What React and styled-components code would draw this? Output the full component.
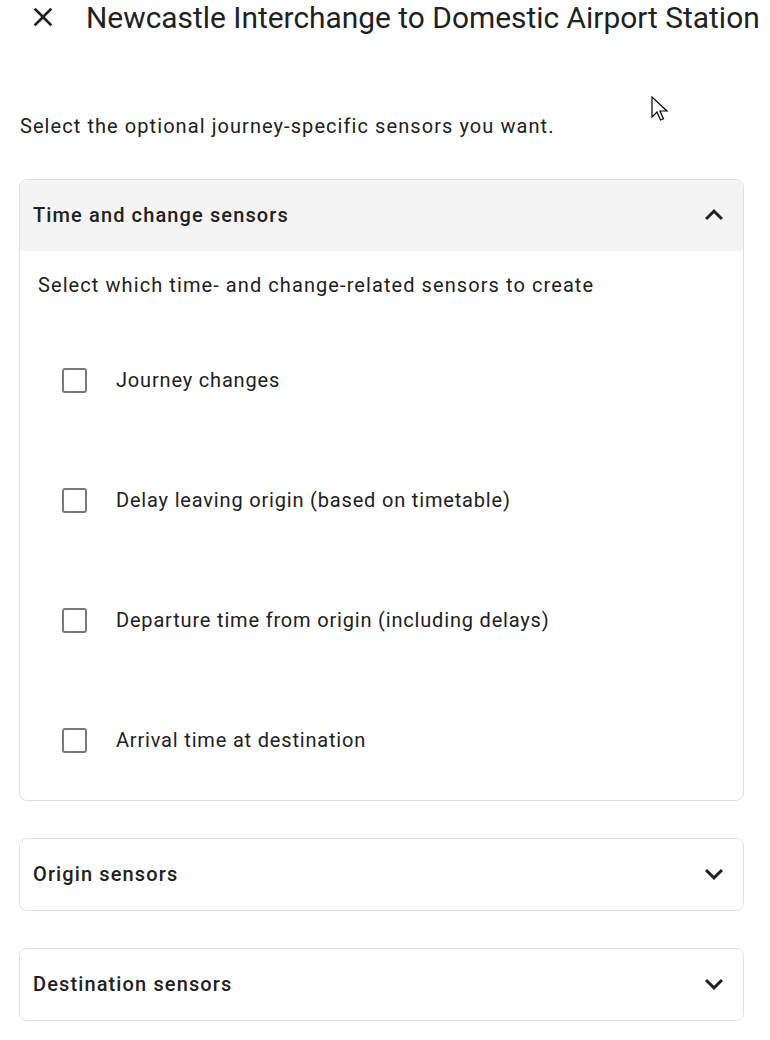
import * as React from 'react'
import styled, { createGlobalStyle } from 'styled-components'

const GlobalStyle = createGlobalStyle`
  body {
    margin: 0;
    background: #ffffff;
    font-family: Roboto, "Noto Sans", sans-serif;
    color: #212121;
  }
`

const Page = styled.div`
  position: relative;
  width: 770px;
  height: 1040px;
  overflow: hidden;
`

const TopBar = styled.div`
  display: flex;
  align-items: center;
  height: 34px;
  padding-left: 27px;
  gap: 27px;
  white-space: nowrap;
`

const CloseButton = styled.button`
  border: 0;
  background: none;
  padding: 0;
  width: 32px;
  height: 32px;
  display: flex;
  align-items: center;
  justify-content: center;
  color: #212121;
`

const Title = styled.h1`
  margin: 0;
  font-size: 29.9px;
  font-weight: 400;
  color: #212121;
`

const Content = styled.div`
  padding: 0 26px 0 19px;
`

const Intro = styled.p`
  margin: 80px 0 41px 1px;
  font-size: 20px;
  line-height: 24px;
  letter-spacing: 1.07px;
  color: #212121;
`

const Card = styled.div`
  border: 1px solid #e0e0e0;
  border-radius: 8px;
  overflow: hidden;
  margin-bottom: 37px;
`

const CardHeader = styled.div`
  display: flex;
  align-items: center;
  justify-content: space-between;
  height: 71px;
  padding: 0 11px 1px 13px;
  box-sizing: border-box;
  background: ${(p) => (p.open ? '#f4f4f4' : '#ffffff')};
`

const CardTitle = styled.div`
  font-size: 20px;
  font-weight: 500;
  letter-spacing: 1.12px;
  color: #212121;
`

const CardBody = styled.div`
  padding: 22px 18px 0;
`

const Description = styled.div`
  font-size: 20px;
  line-height: 24px;
  letter-spacing: 1.08px;
  margin-bottom: 23px;
`

const OptionRow = styled.label`
  display: flex;
  align-items: center;
  height: 120px;
  padding-left: 24px;
  gap: 29px;
`

const Box = styled.span`
  width: 21px;
  height: 21px;
  border: 2.5px solid #7a7a7a;
  border-radius: 3px;
`

const OptionLabel = styled.span`
  font-size: 20px;
  letter-spacing: 0.82px;
  color: #212121;
`

const Cursor = styled.svg`
  position: absolute;
  left: 651px;
  top: 96px;
`

const Chevron = ({ up }) => (
  <svg width="36" height="36" viewBox="0 0 24 24">
    <path
      d={up ? 'M7.41 15.41 12 10.83l4.59 4.58L18 14l-6-6-6 6z' : 'M7.41 8.59 12 13.17l4.59-4.58L18 10l-6 6-6-6z'}
      fill="#212121"
    />
  </svg>
)

const options = [
  'Journey changes',
  'Delay leaving origin (based on timetable)',
  'Departure time from origin (including delays)',
  'Arrival time at destination',
]

export default function App() {
  return (
    <Page>
      <GlobalStyle />
      <TopBar>
        <CloseButton>
          <svg width="32" height="32" viewBox="0 0 24 24">
            <path
              d="M19 6.41 17.59 5 12 10.59 6.41 5 5 6.41 10.59 12 5 17.59 6.41 19 12 13.41 17.59 19 19 17.59 13.41 12z"
              fill="#212121"
            />
          </svg>
        </CloseButton>
        <Title>Newcastle Interchange to Domestic Airport Station</Title>
      </TopBar>
      <Content>
        <Intro>Select the optional journey-specific sensors you want.</Intro>
        <Card>
          <CardHeader open>
            <CardTitle>Time and change sensors</CardTitle>
            <Chevron up />
          </CardHeader>
          <CardBody>
            <Description>Select which time- and change-related sensors to create</Description>
            {options.map((o) => (
              <OptionRow key={o}>
                <Box />
                <OptionLabel>{o}</OptionLabel>
              </OptionRow>
            ))}
          </CardBody>
        </Card>
        <Card>
          <CardHeader>
            <CardTitle>Origin sensors</CardTitle>
            <Chevron />
          </CardHeader>
        </Card>
        <Card>
          <CardHeader>
            <CardTitle>Destination sensors</CardTitle>
            <Chevron />
          </CardHeader>
        </Card>
      </Content>
      <Cursor width="20" height="28" viewBox="0 0 20 28">
        <path d="M1 1 L1 21 L6 16 L9.5 24 L12.5 22.7 L9 15 L16 15 Z" fill="#ffffff" stroke="#000000" strokeWidth="1.2" />
      </Cursor>
    </Page>
  )
}
